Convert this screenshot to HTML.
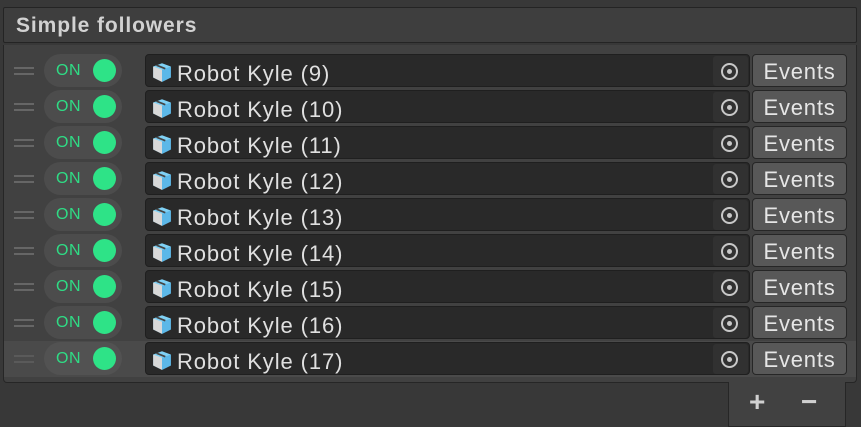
<!DOCTYPE html>
<html><head><style>
body{margin:0;width:861px;height:422px;background:#383838;font-family:"Liberation Sans",sans-serif;overflow:hidden;position:relative}
.hdr{position:absolute;left:3px;top:7px;width:854px;height:36px;background:#3e3e3e;border:1px solid #242424;box-sizing:border-box;border-radius:2px}
.hdr span{position:absolute;left:12px;top:6px;color:#d2d2d2;font-size:21px;font-weight:bold;letter-spacing:0.9px}
.list{position:absolute;left:3px;top:45px;width:854px;height:338px;background:#414141;border:1px solid #262626;border-top:none;box-sizing:border-box;border-radius:0 0 4px 4px}
.row{position:absolute;left:0;width:852px;height:36px}
.hl{background:#4a4a4a}
.drag{position:absolute;left:10px;top:14px;width:20px;height:2px;background:#666;box-shadow:0 6px 0 #666}
.tog{position:absolute;left:40px;top:1px;width:78px;height:33px;background:#4c4c4c;border-radius:17px}
.tog b{position:absolute;left:12px;top:8px;color:#2fdc85;font-size:16px;font-weight:normal;letter-spacing:0.5px}
.tog i{position:absolute;left:49px;top:5px;width:23px;height:23px;border-radius:50%;background:#2ee387}
.obj{position:absolute;left:141px;top:1px;width:605px;height:33px;background:#292929;border:1px solid #1f1f1f;box-sizing:border-box;border-radius:4px}
.obj span{position:absolute;left:31px;top:6px;color:#e0e0e0;font-size:22px;letter-spacing:0.9px}
.ico{position:absolute;left:5px;top:6px}
.tgt{position:absolute;right:1px;top:1px;width:35px;height:30px;background:#313131;border-radius:3px}
.tgt i{position:absolute;left:8px;top:7px;width:13px;height:13px;border:2px solid #c8c8c8;border-radius:50%}
.tgt i:after{content:"";position:absolute;left:4px;top:4px;width:5px;height:5px;border-radius:50%;background:#c8c8c8}
.ev{position:absolute;left:748px;top:1px;width:95px;height:33px;background:#585858;border:1px solid #262626;box-sizing:border-box;border-radius:4px;color:#e6e6e6;font-size:22px;letter-spacing:0.8px;text-align:center;line-height:33px}
.foot{position:absolute;left:728px;top:382px;width:118px;height:45px;background:#414141;border:1px solid #262626;box-sizing:border-box;border-top:none}
.foot span{position:absolute;top:4px;color:#d0d0d0;font-size:28px;font-weight:bold}
</style></head><body>
<div class="hdr"><span>Simple followers</span></div>
<div class="list">
<div class="row" style="top:8px"><div class="drag"></div><div class="tog"><b>ON</b><i></i></div><div class="obj"><svg class="ico" width="22" height="22" viewBox="0 0 20 20"><path d="M2 5l8-3 8 3v10l-8 4-8-4z" fill="#7fd1f5"/><path d="M2 5l8 3v11l-8-4z" fill="#d8d8d8"/><path d="M10 8l8-3v10l-8 4z" fill="#5cb8e8"/><path d="M5 3.8l8 3.2" stroke="#444" stroke-width="1.5"/></svg><span>Robot Kyle (9)</span><div class="tgt"><i></i></div></div><div class="ev">Events</div></div>
<div class="row" style="top:44px"><div class="drag"></div><div class="tog"><b>ON</b><i></i></div><div class="obj"><svg class="ico" width="22" height="22" viewBox="0 0 20 20"><path d="M2 5l8-3 8 3v10l-8 4-8-4z" fill="#7fd1f5"/><path d="M2 5l8 3v11l-8-4z" fill="#d8d8d8"/><path d="M10 8l8-3v10l-8 4z" fill="#5cb8e8"/><path d="M5 3.8l8 3.2" stroke="#444" stroke-width="1.5"/></svg><span>Robot Kyle (10)</span><div class="tgt"><i></i></div></div><div class="ev">Events</div></div>
<div class="row" style="top:80px"><div class="drag"></div><div class="tog"><b>ON</b><i></i></div><div class="obj"><svg class="ico" width="22" height="22" viewBox="0 0 20 20"><path d="M2 5l8-3 8 3v10l-8 4-8-4z" fill="#7fd1f5"/><path d="M2 5l8 3v11l-8-4z" fill="#d8d8d8"/><path d="M10 8l8-3v10l-8 4z" fill="#5cb8e8"/><path d="M5 3.8l8 3.2" stroke="#444" stroke-width="1.5"/></svg><span>Robot Kyle (11)</span><div class="tgt"><i></i></div></div><div class="ev">Events</div></div>
<div class="row" style="top:116px"><div class="drag"></div><div class="tog"><b>ON</b><i></i></div><div class="obj"><svg class="ico" width="22" height="22" viewBox="0 0 20 20"><path d="M2 5l8-3 8 3v10l-8 4-8-4z" fill="#7fd1f5"/><path d="M2 5l8 3v11l-8-4z" fill="#d8d8d8"/><path d="M10 8l8-3v10l-8 4z" fill="#5cb8e8"/><path d="M5 3.8l8 3.2" stroke="#444" stroke-width="1.5"/></svg><span>Robot Kyle (12)</span><div class="tgt"><i></i></div></div><div class="ev">Events</div></div>
<div class="row" style="top:152px"><div class="drag"></div><div class="tog"><b>ON</b><i></i></div><div class="obj"><svg class="ico" width="22" height="22" viewBox="0 0 20 20"><path d="M2 5l8-3 8 3v10l-8 4-8-4z" fill="#7fd1f5"/><path d="M2 5l8 3v11l-8-4z" fill="#d8d8d8"/><path d="M10 8l8-3v10l-8 4z" fill="#5cb8e8"/><path d="M5 3.8l8 3.2" stroke="#444" stroke-width="1.5"/></svg><span>Robot Kyle (13)</span><div class="tgt"><i></i></div></div><div class="ev">Events</div></div>
<div class="row" style="top:188px"><div class="drag"></div><div class="tog"><b>ON</b><i></i></div><div class="obj"><svg class="ico" width="22" height="22" viewBox="0 0 20 20"><path d="M2 5l8-3 8 3v10l-8 4-8-4z" fill="#7fd1f5"/><path d="M2 5l8 3v11l-8-4z" fill="#d8d8d8"/><path d="M10 8l8-3v10l-8 4z" fill="#5cb8e8"/><path d="M5 3.8l8 3.2" stroke="#444" stroke-width="1.5"/></svg><span>Robot Kyle (14)</span><div class="tgt"><i></i></div></div><div class="ev">Events</div></div>
<div class="row" style="top:224px"><div class="drag"></div><div class="tog"><b>ON</b><i></i></div><div class="obj"><svg class="ico" width="22" height="22" viewBox="0 0 20 20"><path d="M2 5l8-3 8 3v10l-8 4-8-4z" fill="#7fd1f5"/><path d="M2 5l8 3v11l-8-4z" fill="#d8d8d8"/><path d="M10 8l8-3v10l-8 4z" fill="#5cb8e8"/><path d="M5 3.8l8 3.2" stroke="#444" stroke-width="1.5"/></svg><span>Robot Kyle (15)</span><div class="tgt"><i></i></div></div><div class="ev">Events</div></div>
<div class="row" style="top:260px"><div class="drag"></div><div class="tog"><b>ON</b><i></i></div><div class="obj"><svg class="ico" width="22" height="22" viewBox="0 0 20 20"><path d="M2 5l8-3 8 3v10l-8 4-8-4z" fill="#7fd1f5"/><path d="M2 5l8 3v11l-8-4z" fill="#d8d8d8"/><path d="M10 8l8-3v10l-8 4z" fill="#5cb8e8"/><path d="M5 3.8l8 3.2" stroke="#444" stroke-width="1.5"/></svg><span>Robot Kyle (16)</span><div class="tgt"><i></i></div></div><div class="ev">Events</div></div>
<div class="row hl" style="top:296px"><div class="drag" style="background:#5a5a5a;box-shadow:0 6px 0 #5a5a5a"></div><div class="tog" style="background:#525252"><b>ON</b><i></i></div><div class="obj"><svg class="ico" width="22" height="22" viewBox="0 0 20 20"><path d="M2 5l8-3 8 3v10l-8 4-8-4z" fill="#7fd1f5"/><path d="M2 5l8 3v11l-8-4z" fill="#d8d8d8"/><path d="M10 8l8-3v10l-8 4z" fill="#5cb8e8"/><path d="M5 3.8l8 3.2" stroke="#444" stroke-width="1.5"/></svg><span>Robot Kyle (17)</span><div class="tgt"><i></i></div></div><div class="ev">Events</div></div>
</div>
<div class="foot"><span style="left:20px">+</span><span style="left:72px">−</span></div>
</body></html>
